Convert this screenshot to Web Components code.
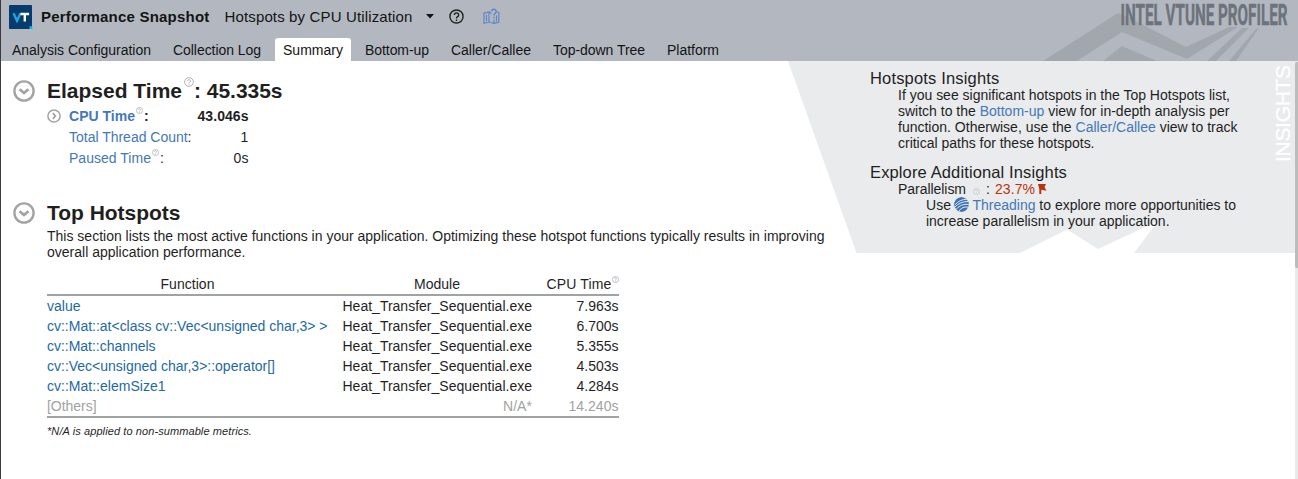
<!DOCTYPE html>
<html lang="en">
<head>
<meta charset="utf-8">
<title>Performance Snapshot</title>
<style>
body{margin:0;background:#fff;font-family:"Liberation Sans",Arial,sans-serif;font-size:14px;color:#1f1f1f;overflow:hidden}
</style>
</head>
<body>
<vt-app></vt-app>
<script>
function define(name, html, ready) {
  const t = document.createElement('template');
  t.innerHTML = html;
  customElements.define(name, class extends HTMLElement {
    connectedCallback() {
      if (this.shadowRoot) return;
      this.attachShadow({mode: 'open'}).append(t.content.cloneNode(true));
      if (ready) ready(this);
    }
  });
}

/* A single line of text, tracked so that it fills the width given in "w". */
define('fit-text', `<style>:host{display:block;flex:none;white-space:pre;line-height:16px;height:16px;width:max-content}</style><slot></slot>`, el => {
  const w = parseFloat(el.getAttribute('w'));
  if (!w) return;
  const natural = el.getBoundingClientRect().width;
  el.style.letterSpacing = ((w - natural) / el.textContent.length) + 'px';
  el.style.width = w + 'px';
});

define('vt-link', `<style>:host{color:#4478b8}</style><slot></slot>`);

define('help-mark', `<style>:host{display:block;flex:none;width:var(--s,8px);height:var(--s,8px);color:#b4b4b4}svg{display:block;width:100%;height:100%}</style>
<svg viewBox="0 0 16 16" fill="none" stroke="currentColor"><circle cx="8" cy="8" r="7"/><path d="M5.7 6.3a2.3 2.2 0 1 1 3.5 1.9C8.3 8.8 8 9.1 8 10"/><path d="M8 11.2v1.6"/></svg>`,
el => el.shadowRoot.querySelector('svg').style.strokeWidth = el.getAttribute('sw') || 1.8);

define('fold-mark', `<style>:host{display:block;flex:none;width:var(--s,22px);height:var(--s,22px)}:host([closed]){transform:rotate(-90deg)}svg{display:block;width:100%;height:100%}</style>
<svg viewBox="0 0 22 22" fill="none" stroke="#a3a3a3"><circle cx="11" cy="11" r="9.6" stroke-width="2.4"/><path d="M6.6 9.2 11 13l4.4-3.8" stroke-width="2.8"/></svg>`);

define('vt-tab', `<style>:host{display:flex;align-items:flex-start;box-sizing:border-box;height:23px;padding:4px 8px 0;border-radius:3px 3px 0 0}:host([active]){background:#fff}</style><slot></slot>`);

define('vt-header', `<style>
:host{display:block;position:relative;height:61px;background:#b3b8c0;color:#141414}
.bg{position:absolute;right:0;top:0}
.top{display:flex;height:38px;padding-left:8px;position:relative}
.logo{display:block;margin-top:5px}
.t{margin-top:9px;font-size:15px}
b{font-weight:700}
.tabs{display:flex;gap:6px;padding-left:3px;position:relative}
</style>
<svg class="bg" width="298" height="61" viewBox="1000 0 298 61">
 <g fill="#a2a7ae"><path d="M1043 61 1118 13 1130 18 1186 47 1229 27 1238 27 1187 59 1122 32 1077 61z"/><path d="M1103 61 1122 46 1157 61z"/><path d="M1207 61 1242 28 1249 28 1216 61z"/><path d="M1229 61 1256 29 1259 28 1236 61z"/></g>
 <g font-family="Roboto,sans-serif" font-weight="700" font-size="29.500"><text x="1120.500" y="25" textLength="167" lengthAdjust="spacingAndGlyphs" fill="#6d737c" stroke="#6d737c" stroke-width=".5">INTEL VTUNE PROFILER</text></g>
</svg>
<div class="top">
 <svg class="logo" width="24" height="24" viewBox="0 0 24 24"><rect width="23" height="24" rx="1" fill="#053c6d"/><path d="M4.500 8.200 8 15.700 11.500 8.200" fill="none" stroke="#25a5dc" stroke-width="2.300"/><path d="M11.500 9h8.600M15.800 9v7.500" fill="none" stroke="#fff" stroke-width="2.400"/><path d="M20.500 21.200h2.800V24h-2.800z" fill="#17b5ee"/></svg>
 <fit-text class="t" style="margin-left:8px" w="168.500"><b>Performance Snapshot</b></fit-text>
 <fit-text class="t" style="margin-left:15px" w="188">Hotspots by CPU Utilization</fit-text>
 <svg width="8" height="5" style="margin:14px 0 0 13px"><path d="M0 0h8L4 4.500z" fill="#141414"/></svg>
 <help-mark sw="1.500" style="--s:15px;color:#202225;margin:9px 0 0 15px"></help-mark>
 <svg width="17" height="17" viewBox="0 0 17 17" style="margin:8px 0 0 19px" fill="none" stroke="#5f86c6" stroke-width="1.200"><path d="M8.500 5.500 6 4 1 5.300v10L6 14l5 1.500 4.800-1.300V4.500L14 4.200M6 4v10M11 11.500v4M3.500 7v6M13.500 7.500v6"/><path d="M8.600 3.300a2.300 2.200 0 1 1 3.500 2c-.9.500-1.200 1-1.200 2.300M10.900 8.800v1.500" stroke-width="1.500"/></svg>
</div>
<div class="tabs">
 <vt-tab><fit-text w="139">Analysis Configuration</fit-text></vt-tab>
 <vt-tab><fit-text w="88">Collection Log</fit-text></vt-tab>
 <vt-tab active><fit-text w="60">Summary</fit-text></vt-tab>
 <vt-tab><fit-text w="64">Bottom-up</fit-text></vt-tab>
 <vt-tab><fit-text w="80">Caller/Callee</fit-text></vt-tab>
 <vt-tab><fit-text w="92">Top-down Tree</fit-text></vt-tab>
 <vt-tab><fit-text w="52">Platform</fit-text></vt-tab>
</div>`);

define('metric-row', `<style>:host{display:flex;height:16px;margin-bottom:5px;width:201.500px}:host([bold]){font-weight:700}
.v{margin-left:auto}.i{width:22px;flex:none}</style><div class="i"><slot name="icon"></slot></div><slot></slot><div class="v"><slot name="value"></slot></div>`);

define('vt-section', `<style>:host{display:flex}.body{margin-left:12px}.h{display:flex;font-size:21px;font-weight:700;height:24px;margin-top:-1px}</style>
<fold-mark></fold-mark><div class="body"><div class="h"><slot name="title"></slot></div><slot></slot></div>`);

define('hot-table', `<style>
:host{display:block;width:572px;margin-top:16px}
.r{display:grid;grid-template-columns:281px 204px 86.500px;height:20px;align-items:start}
.r>*{justify-self:end}
.r>:first-child{justify-self:start}
.head{height:18px;border-bottom:2px solid #a0a3a3}
.head>:first-child{justify-self:center}.head>:nth-child(2){justify-self:start;margin-left:86px}
.list{padding-top:2px;height:118px;border-bottom:2px solid #a0a3a3;margin-bottom:5px}
.c{display:flex}.fn{color:#1d69a5}.o{color:#a2a2a2}.o .fn{color:#a2a2a2}
.n{font-size:11px;font-style:italic}
</style>
<div class="r head"><fit-text w="54">Function</fit-text><fit-text w="46">Module</fit-text><div class="c"><fit-text w="65">CPU Time</fit-text><help-mark style="--s:7px;margin:0"></help-mark></div></div>
<div class="list"></div>
<fit-text class="n" w="205">*N/A is applied to non-summable metrics.</fit-text>`, el => {
  const rows = [['value', 33.5, '7.963s'], ['cv::Mat::at<class cv::Vec<unsigned char,3> >', 280.5, '6.700s'], ['cv::Mat::channels', 108.5, '5.355s'], ['cv::Vec<unsigned char,3>::operator[]', 228, '4.503s'], ['cv::Mat::elemSize1', 118.5, '4.284s'], ['[Others]', 49.5, '14.240s']];
  const list = el.shadowRoot.querySelector('.list');
  const cell = (text, w, cls) => {
    const c = document.createElement('fit-text');
    c.textContent = text; c.setAttribute('w', w); c.className = cls;
    return c;
  };
  rows.forEach(([fn, w, time], i) => {
    const last = i === rows.length - 1;
    const r = document.createElement('div');
    r.className = last ? 'r o' : 'r';
    r.append(cell(fn, w, 'fn'), last ? cell('N/A*', 29, '') : cell('Heat_Transfer_Sequential.exe', 189.5, ''), cell(time, last ? 50 : 42, ''));
    list.append(r);
  });
});

define('insights-panel', `<style>
:host{display:block;position:relative;width:507px;height:192px;flex:none}
.bg{position:absolute;inset:0}
.in{position:relative;padding:7px 0 0 82px}
.h{font-size:16.500px;line-height:20px;height:20px}
.b{padding-left:28px}.s{padding-left:56px;height:16px}.l{display:flex}
.tag{position:absolute;right:2px;top:5px;writing-mode:vertical-rl;transform:rotate(180deg);color:#fff;font-size:21px;line-height:20px;height:96px;letter-spacing:-.3px;white-space:nowrap;-webkit-text-stroke:.3px #fff}
</style>
<svg class="bg" width="507" height="192" viewBox="788 61 507 192"><path fill="#e9ebec" d="M788 61H1295V253H1134L1158 221 1098 249 1067 229.500 1020 253H856.500z"/></svg>
<div class="in">
 <fit-text class="h" w="129.500">Hotspots Insights</fit-text>
 <div class="b" style="padding-bottom:11px;margin-top:-1px">
 <fit-text w="332">If you see significant hotspots in the Top Hotspots list,</fit-text>
 <fit-text w="331.500">switch to the <vt-link>Bottom-up</vt-link> view for in-depth analysis per</fit-text>
 <fit-text w="339.500">function. Otherwise, use the <vt-link>Caller/Callee</vt-link> view to track</fit-text>
 <fit-text w="196.500">critical paths for these hotspots.</fit-text>
 </div>
 <fit-text class="h" w="197">Explore Additional Insights</fit-text>
 <div class="b l" style="margin-top:-1px"><fit-text w="68">Parallelism</fit-text><help-mark sw="2" style="--s:7px;color:#c9cbcc;margin:7px 0 0 7px"></help-mark><fit-text style="margin-left:6px" w="4">:</fit-text><fit-text style="margin-left:5px;color:#b93312" w="40">23.7%</fit-text>
 <svg width="9" height="10" style="margin:3px 0 0 3px"><path d="M0 0H8L6.500 3l2 3.700L3.300 5.700V10H1.300V5z" fill="#b93312"/></svg></div>
 <div class="s l"><fit-text w="25">Use</fit-text>
 <svg width="15" height="15" viewBox="0 0 15 15" style="margin:0 0 0 3px;overflow:hidden;border-radius:50%"><circle cx="7.500" cy="7.500" r="7.500" fill="#3f72b5"/><path d="M1 6.500Q7 2 14 3.500M0 9Q7 4 15 6M0 12Q7 6 15 9M3 14Q8 8.500 14.500 12" fill="none" stroke="#e9ebec" stroke-width=".9" transform="rotate(-12 7.500 7.500)"/></svg>
 <fit-text style="margin-left:3.500px" w="263.500"><vt-link>Threading</vt-link> to explore more opportunities to</fit-text></div>
 <div class="s"><fit-text w="243.500">increase parallelism in your application.</fit-text></div>
</div>
<div class="tag">INSIGHTS</div>`);

define('vt-app', `<style>
:host{display:block;box-sizing:border-box;height:479px;border-left:1px solid #3a3c40}
.main{display:flex;height:418px}
.left{width:787px;flex:none;padding:19px 0 0 12px;box-sizing:border-box}
.bar{width:3px;background:#e9e9e9;height:418px}.bar i{display:block;height:206px;margin-top:1px;background:#bcbcbc;border-radius:2px 0 0 2px}
.big{height:24px;line-height:24px}
</style>
<vt-header></vt-header>
<div class="main">
 <div class="left">
 <vt-section>
  <fit-text slot="title" class="big" w="135">Elapsed Time</fit-text>
  <help-mark slot="title" sw="1.600" style="--s:10px;margin:-2px 0 0 2px"></help-mark>
  <fit-text slot="title" class="big" w="88.500">: 45.335s</fit-text>
  <div style="padding-top:5px">
  <metric-row bold><fold-mark slot="icon" closed style="--s:14px;margin-top:1px"></fold-mark><fit-text w="66"><vt-link>CPU Time</vt-link></fit-text><help-mark style="--s:7px;margin:-1px 1px 0 1px"></help-mark><fit-text w="4">:</fit-text><fit-text slot="value" w="51">43.046s</fit-text></metric-row>
  <metric-row><fit-text w="122.500"><vt-link>Total Thread Count</vt-link>:</fit-text><fit-text slot="value" w="8">1</fit-text></metric-row>
  <metric-row><fit-text w="82"><vt-link>Paused Time</vt-link></fit-text><help-mark style="--s:7px;margin:-1px 1px 0 1px"></help-mark><fit-text w="4">:</fit-text><fit-text slot="value" w="15">0s</fit-text></metric-row>
  </div>
 </vt-section>
 <vt-section style="margin-top:31px">
  <fit-text slot="title" class="big" w="133.500">Top Hotspots</fit-text>
  <div style="padding-top:3px">
  <fit-text w="777.500">This section lists the most active functions in your application. Optimizing these hotspot functions typically results in improving</fit-text>
  <fit-text w="198.500">overall application performance.</fit-text>
  </div>
  <hot-table></hot-table>
 </vt-section>
 </div>
 <insights-panel></insights-panel>
 <div class="bar"><i></i></div>
</div>`);
</script>
</body>
</html>
